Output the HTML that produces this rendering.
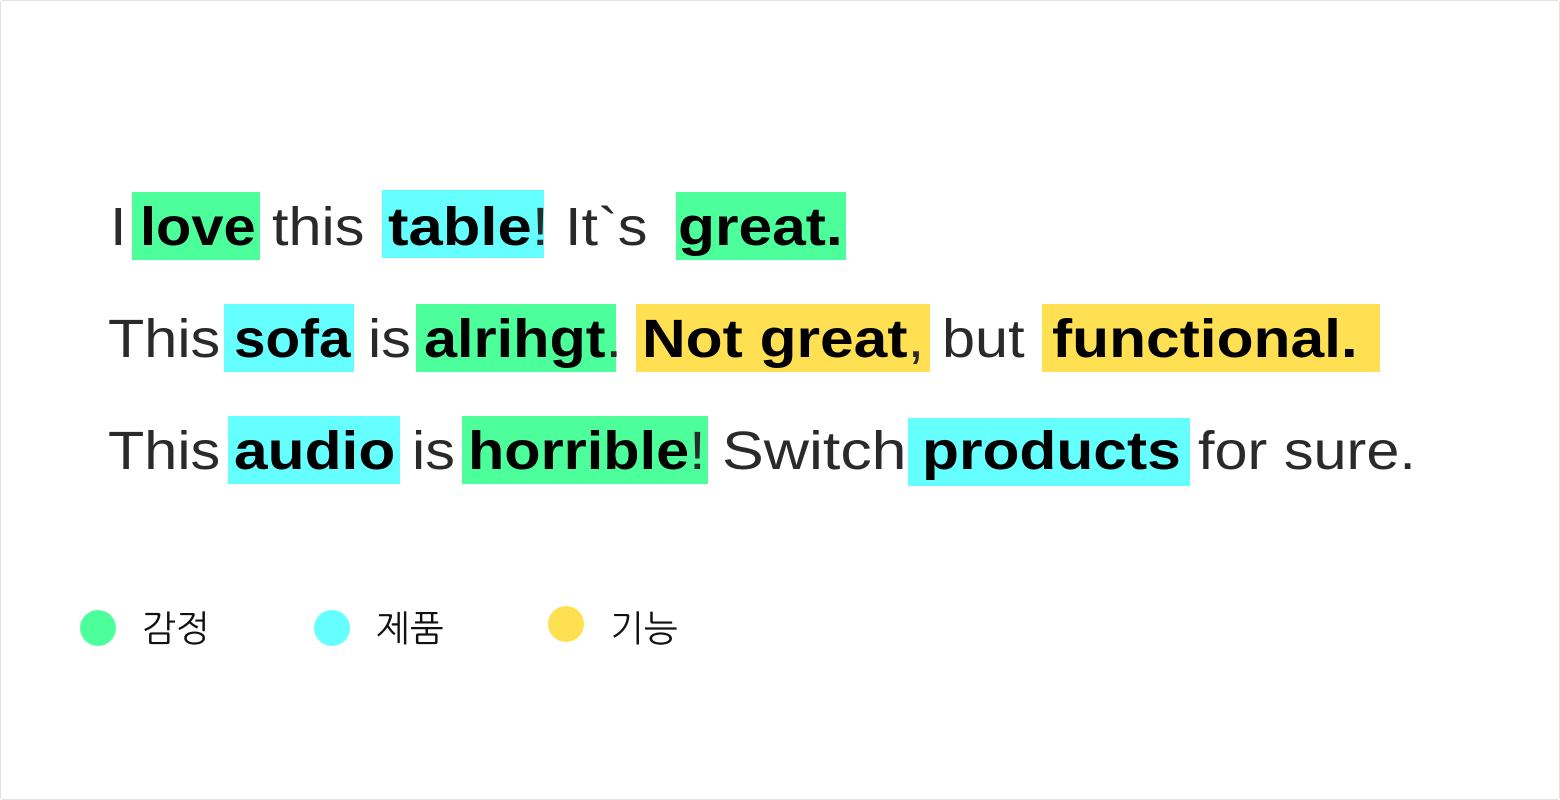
<!DOCTYPE html>
<html><head><meta charset="utf-8"><style>
body{margin:0;width:1560px;height:800px;background:#fff;position:relative;overflow:hidden;font-family:"Liberation Sans",sans-serif}
.frame{position:absolute;left:0;top:0;width:1558px;height:798px;border:1px solid #e2e2e2;border-radius:3px}
.b{position:absolute}
.w{position:absolute;font-size:54px;line-height:1;white-space:nowrap;color:#111;transform-origin:0 0}
.t{font-weight:300;color:#2a2a2a;transform:scaleX(1.1)}
.s{font-weight:bold;color:#000;transform:scaleX(1.12)}
.s .t{transform:none;display:inline}
.g{background:#4dff9b}.c{background:#66ffff}.y{background:#ffe052}
.dot{position:absolute;width:36px;height:36px;border-radius:50%}
.lg{position:absolute;font-family:"Liberation Sans","NanumGothic","Noto Sans CJK KR",sans-serif;font-size:36px;line-height:1;color:#111}
</style></head><body>
<div class="frame"></div>
<div class="b g" style="left:132px;top:192px;width:128px;height:68px"></div>
<div class="b c" style="left:382px;top:190px;width:162px;height:68px"></div>
<div class="b g" style="left:676px;top:192px;width:170px;height:68px"></div>
<div class="b c" style="left:224px;top:304px;width:130px;height:68px"></div>
<div class="b g" style="left:416px;top:304px;width:200px;height:68px"></div>
<div class="b y" style="left:636px;top:304px;width:294px;height:68px"></div>
<div class="b y" style="left:1042px;top:304px;width:338px;height:68px"></div>
<div class="b c" style="left:228px;top:416px;width:172px;height:68px"></div>
<div class="b g" style="left:462px;top:416px;width:246px;height:68px"></div>
<div class="b c" style="left:908px;top:418px;width:282px;height:68px"></div>

<div class="w t" style="left:110px;top:200px">I</div>
<div class="w s" style="left:140px;top:200px;transform:scaleX(1.07)">love</div>
<div class="w t" style="left:272px;top:200px">this</div>
<div class="w s" style="left:388px;top:200px;transform:scaleX(1.14)">table<span class="t">!</span></div>
<div class="w t" style="left:565px;top:200px">It`s</div>
<div class="w s" style="left:678px;top:200px">great.</div>

<div class="w t" style="left:108px;top:312px">This</div>
<div class="w s" style="left:234px;top:312px;transform:scaleX(1.05)">sofa</div>
<div class="w t" style="left:368px;top:312px">is</div>
<div class="w s" style="left:424px;top:312px;transform:scaleX(1.1)">alrihgt<span class="t">.</span></div>
<div class="w s" style="left:642px;top:312px;transform:scaleX(1.12)">Not great<span class="t">,</span></div>
<div class="w t" style="left:942px;top:312px">but</div>
<div class="w s" style="left:1052px;top:312px">functional.</div>

<div class="w t" style="left:108px;top:424px">This</div>
<div class="w s" style="left:234px;top:424px">audio</div>
<div class="w t" style="left:412px;top:424px">is</div>
<div class="w s" style="left:468px;top:424px;transform:scaleX(1.1)">horrible<span class="t">!</span></div>
<div class="w t" style="left:722px;top:424px;transform:scaleX(1.16)">Switch</div>
<div class="w s" style="left:922px;top:424px">products</div>
<div class="w t" style="left:1198px;top:424px">for sure.</div>

<div class="dot" style="left:80px;top:610px;background:#4dff9b"></div>
<div class="lg" style="left:142px;top:611px">감정</div>
<div class="dot" style="left:314px;top:610px;background:#66ffff"></div>
<div class="lg" style="left:376px;top:611px">제품</div>
<div class="dot" style="left:548px;top:606px;background:#ffe052"></div>
<div class="lg" style="left:610px;top:611px">기능</div>
</body></html>
